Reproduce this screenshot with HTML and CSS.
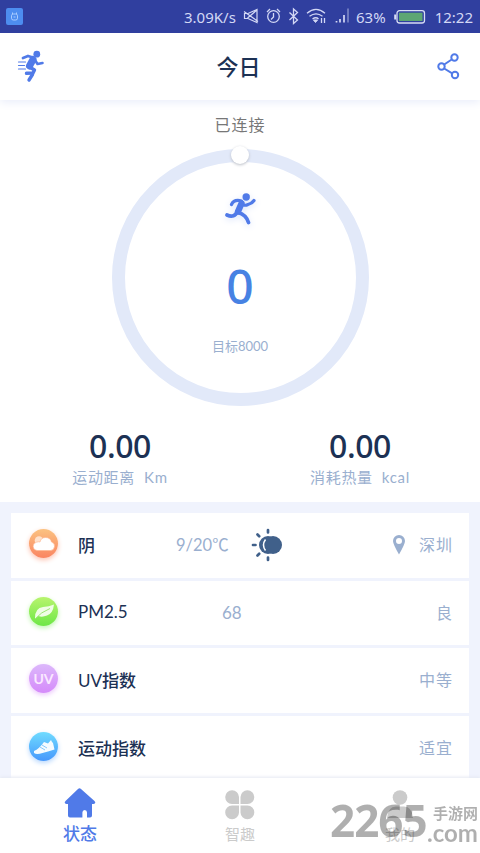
FILE: index.html
```html
<!DOCTYPE html>
<html lang="zh-CN">
<head>
<meta charset="utf-8">
<meta name="viewport" content="width=device-width, initial-scale=1">
<title>今日</title>
<link rel="stylesheet" href="styles.css">
</head>
<body>
<div class="app">
  <div class="status">
    <svg class="usb" width="17" height="17" viewBox="0 0 17 17"><rect width="17" height="17" rx="2" fill="#4d8df0"/><rect x="5.500" y="6" width="6" height="6" rx="1.800" fill="none" stroke="#a9ccff"/><path d="M6.500 6V4.500M10.500 6V4.500M7.500 9h2" fill="none" stroke="#a9ccff"/></svg>
    <span class="speed">3.09K/s</span>
    <svg class="sys" width="108" height="20" viewBox="0 0 108 20" fill="none" stroke="#d3d8f5" stroke-width="1.300">
      <path d="M1.500 6.500H5L14 2.500V15.500L5 11.500H1.500ZM1 4.500L15 14.500M4.500 11L14 3" stroke-width="1.200"/>
      <circle cx="30.500" cy="9.500" r="5.800"/><path d="M30.500 6v4l-2.500 2.500M24 5l3-3M37 5l-3-3"/>
      <path d="M46.500 5.500l8 7.500-4 3.500V2l4 3.500-8 7.500"/>
      <path d="M64 6.200q9-7.500 18 0M66.500 9.300q6.500-5 13 0M69.500 12q3.500-2.500 6 0"/><path d="M70.500 13h4l-2 2.500z" fill="#d3d8f5" stroke-width="1"/><path d="M78.500 16v-5M81.500 11v5"/>
      <path d="M93.500 14v1.500M97 12v3.500M101 8v7.500" stroke-width="1.700"/><path d="M105 1.500v14" stroke-width="1.700" opacity=".45"/>
    </svg>
    <span class="percent">63%</span>
    <svg class="battery" width="32" height="14" viewBox="0 0 32 14"><rect x="3" y=".7" width="27.500" height="12.300" rx="2.500" fill="none" stroke="#d8ddf5" stroke-width="1.300"/><rect x="5" y="2.700" width="23.500" height="8.300" fill="#5da673"/><path d="M1.200 4.500v5" stroke="#d8ddf5" stroke-width="2"/></svg>
    <span class="time">12:22</span>
  </div>

  <header class="header">
    <svg width="30" height="34" viewBox="0 0 30 34" fill="none" stroke="#507ae8" stroke-linecap="round" stroke-linejoin="round">
      <circle cx="21.800" cy="4.200" r="3.400" fill="#507ae8" stroke="none"/>
      <path d="M8 8l5-2 5 1.500" stroke-width="2.800"/><path d="M19 8.500l3.500 5.500 5-1" stroke-width="2.600"/><path d="M18 9.500L14.500 16" stroke-width="7"/><path d="M14.500 17l5 3-1.500 3-6.500.3" stroke-width="3.400"/><path d="M17.500 24.500l-3.500 5.500" stroke-width="3.400"/>
      <path d="M3.500 12h7M3.500 15.500h6M3.500 19h7" stroke-width="1.200"/>
    </svg>
    <h1 class="title">今日</h1>
    <svg width="24" height="28" viewBox="0 0 24 28" fill="none" stroke="#507ae8" stroke-width="2"><circle cx="4.500" cy="13.500" r="3.200"/><circle cx="17.500" cy="4.500" r="3.200"/><circle cx="18" cy="22" r="3.200"/><path d="M7.200 11.500l7.500-5M7.200 15.500l8 4.800"/></svg>
  </header>

  <main class="main">
    <section class="summary">
      <p class="connected">已连接</p>
      <div class="ring">
        <span class="knob"></span>
        <svg class="runner" width="34" height="38" viewBox="0 0 34 38" fill="none" stroke="#507ae8" stroke-linecap="round" stroke-linejoin="round"><circle cx="23.200" cy="6" r="3.700" fill="#507ae8" stroke="none"/><path d="M8.500 13.500q2.500-5.500 10-3.500 1 6 6.500 3.500 4-1 6-4" stroke-width="3.200"/><path d="M18.500 12.500l-3.500 8" stroke-width="6.300"/><path d="M14.500 20q-3 7.500-10.500 4M15 21.500q8 2 10.500 10" stroke-width="3.700"/></svg>
        <strong class="steps">0</strong>
        <span class="goal">目标8000</span>
      </div>
      <div class="stats">
        <div class="stat"><strong class="value">0.00</strong><span class="label">运动距离&nbsp; Km</span></div>
        <div class="stat"><strong class="value">0.00</strong><span class="label">消耗热量&nbsp; kcal</span></div>
      </div>
    </section>

    <section class="list">
      <div class="card">
        <span class="badge weather"><svg width="30" height="30" viewBox="0 0 30 30"><circle cx="10" cy="11.500" r="4.300" fill="#ffe1cb"/><path d="M8 21.500a4.200 4.200 0 0 1-.5-8.300Q10 12.500 11 13q1-4.500 5.500-4.500 5 0 6 4.500 3.500 1 3 4.500-.5 4-4 4Z" fill="#fff" stroke="#ffb18a" stroke-width=".6"/></svg></span>
        <span class="name">阴</span><span class="reading temp">9/20℃</span>
        <svg class="sun" width="32" height="34" viewBox="0 0 32 34"><circle cx="17" cy="17" r="9" fill="#40608a"/><circle cx="22" cy="17" r="9" fill="#40608a"/><path d="M14.500 11.500q-4 5.500 0 11" fill="none" stroke="#fff" stroke-width="1.500"/><path d="M17 2v2.500M17 29.500V32M2 17h2.500M6.500 6.500l1.700 1.700M6.500 27.500l1.700-1.700" stroke="#40608a" stroke-width="2.700" stroke-linecap="round"/></svg>
        <svg class="pin" width="12" height="20" viewBox="0 0 12 20"><path fill-rule="evenodd" d="M6 0a6 6 0 0 1 6 6q0 3-6 13.500Q0 9 0 6a6 6 0 0 1 6-6Zm0 3a3 3 0 1 0 0 6 3 3 0 0 0 0-6Z" fill="#9aafcf"/></svg>
        <span class="result">深圳</span>
      </div>
      <div class="card">
        <span class="badge air"><svg width="30" height="30" viewBox="0 0 30 30"><path d="M6 21Q6 11 14 10q6-.5 11-2.500-1 9-7 11-5 2-8.500.5L6 22Z" fill="#effde5"/><path d="M6 22q6-7 15-10.500" fill="none" stroke="#9be872" stroke-width="1"/></svg></span>
        <span class="name"><span class="latin">PM2.5</span></span><span class="reading pm">68</span><span class="result">良</span>
      </div>
      <div class="card">
        <span class="badge uv">UV</span><span class="name"><span class="latin">UV</span>指数</span><span class="result">中等</span>
      </div>
      <div class="card">
        <span class="badge sport"><svg width="30" height="30" viewBox="0 0 30 30"><path d="M5 19q5-2 10-9l4 1.500 3-3.500q1 2.500 2 3l1.500 6.500q-7 2-12 3.500-6 2-8.500 0Z" fill="#f5fbff"/><path d="M11 15l5 3M13 13l5 3" fill="none" stroke="#6dbcf9" stroke-width=".8"/></svg></span>
        <span class="name">运动指数</span><span class="result">适宜</span>
      </div>
    </section>
  </main>

  <nav class="tabs">
    <a class="tab active"><svg width="34" height="32" viewBox="0 0 34 32"><path d="M15 1q1.500-1.500 3 0L31.500 13q2 2.500-1 3H29v11.500q0 2-2 2h-3V24.500q0-2.500-2.300-2.500t-2.300 2.500v5H7q-2 0-2-2V16H3.500q-3-.5-1-3Z" fill="#507ae8"/></svg><span>状态</span></a>
    <a class="tab"><svg width="34" height="32" viewBox="0 0 34 32" fill="#cbcbcb"><path d="M16 16H9A6.900 6.900 0 1 1 16 9ZM17.500 16H24.500A6.900 6.900 0 1 0 17.500 9ZM16 17.500H9A6.900 6.900 0 1 0 16 24.500ZM17.500 17.500H24.500A6.900 6.900 0 1 1 17.500 24.500Z"/></svg><span>智趣</span></a>
    <a class="tab"><svg width="34" height="32" viewBox="0 0 34 32" fill="#cbcbcb"><circle cx="17" cy="9.500" r="7.300"/><path d="M4 30q1-11.500 9-11.500h8q8 0 9 11.500Z"/></svg><span>我的</span></a>
  </nav>
  <div class="watermark"><span class="digits">2265</span><span class="site"><span class="cn">手游网</span><span class="com">.com</span></span></div>
</div>
</body>
</html>
```
FILE: styles.css
```css
* { box-sizing: border-box; }
body {
  margin: 0;
  background: #fff;
  font-family: Lato, "Noto Sans CJK SC", sans-serif;
}
svg { display: block; flex: none; }
.app {
  position: relative;
  display: flex;
  flex-direction: column;
  width: 480px;
  height: 853px;
  overflow: hidden;
}
.status {
  position: relative;
  z-index: 2;
  display: flex;
  align-items: center;
  flex: none;
  height: 33px;
  padding: 0 7px 0 6px;
  background: #303f9f;
  color: #d3d8f5;
  font-family: "Noto Sans", sans-serif;
  font-size: 15px;
  white-space: nowrap;
}
.speed { width: 53px; margin-left: 161px; }
.sys { margin: 1px 0 0 6px; }
.percent { width: 32px; margin-left: 5px; }
.battery { margin-left: 6px; }
.time { margin-left: auto; }
.header {
  position: relative;
  z-index: 1;
  display: flex;
  align-items: center;
  justify-content: space-between;
  flex: none;
  height: 67px;
  padding: 0 19px 0 15px;
  background: #fff;
  box-shadow: 0 2px 9px #e8ecfa;
}
.title {
  margin: -4px 0 0 -5px;
  color: #1c3154;
  font-size: 22px;
  font-weight: 500;
}
.main {
  flex: 1;
  min-height: 0;
  overflow: hidden;
  background: #f0f3fd;
}
.summary {
  display: flex;
  flex-direction: column;
  align-items: center;
  height: 402px;
  padding-top: 14px;
  background: #fff;
}
.connected {
  margin: 0;
  color: #777;
  font-size: 16px;
  line-height: 22px;
  letter-spacing: 1px;
}
.ring {
  position: relative;
  display: flex;
  flex-direction: column;
  align-items: center;
  flex: none;
  width: 257px;
  height: 257px;
  margin-top: 13px;
  padding-top: 29px;
  border: 13px solid #e2e9f9;
  border-radius: 50%;
}
.knob {
  position: absolute;
  top: -16px;
  left: 106px;
  width: 18px;
  height: 18px;
  border-radius: 50%;
  background: #fff;
  box-shadow: 0 1px 3px #b9bdc6;
}
.runner { margin-left: -1px; filter: drop-shadow(0 2px 3px #dbe4fb); }
.steps {
  margin-top: 29px;
  color: #4782e3;
  font-family: "Noto Sans", sans-serif;
  font-size: 48px;
  font-weight: 500;
  line-height: 56px;
}
.goal {
  margin-top: 22px;
  color: #9aafcf;
  font-size: 13px;
  line-height: 20px;
}
.stats { display: flex; width: 480px; margin-top: 22px; }
.stat { display: flex; flex: 1; flex-direction: column; align-items: center; }
.value {
  color: #1c3154;
  font-family: "Noto Sans", sans-serif;
  font-size: 32px;
  font-weight: 500;
  line-height: 36px;
  letter-spacing: -.4px;
}
.label {
  margin-top: 2px;
  color: #9aafcf;
  font-size: 15px;
  line-height: 22px;
  letter-spacing: .7px;
}
.list { display: grid; gap: 3px; padding: 11px 11px 0; }
.card {
  display: flex;
  align-items: center;
  height: 64.600px;
  padding: 0 16px 0 18px;
  background: #fff;
  color: #9aafcf;
  font-size: 17px;
}
.badge {
  display: grid;
  place-items: center;
  flex: none;
  width: 29px;
  height: 29px;
  margin-top: -3px;
  border-radius: 50%;
}
.weather { background: linear-gradient(#fbc281, #fa8561); box-shadow: 0 2px 5px #fdc3b1; }
.air { background: linear-gradient(#b8f46e, #6de746); box-shadow: 0 2px 5px #c1f6b2; }
.uv {
  background: linear-gradient(#dcb8fb, #d58afa);
  box-shadow: 0 2px 5px #ecc9fc;
  color: #fae9ff;
  font-size: 14px;
  font-weight: 700;
}
.sport { background: linear-gradient(#6fdbff, #4698fc); box-shadow: 0 2px 5px #b9d8fd; }
.name {
  width: 98px;
  margin: -2px 0 0 20px;
  color: #1c3154;
  font-size: 17px;
  font-weight: 500;
}
.latin { font-weight: 400; }
.temp { width: 52px; margin-top: -2px; font-size: 16.500px; white-space: nowrap; }
.pm { margin-left: 46px; }
.sun { margin-left: 23px; }
.pin { margin-left: auto; }
.result { margin: -2px 0 0 auto; font-size: 16px; letter-spacing: 1px; }
.pin + .result { margin-left: 14px; }
.tabs {
  position: relative;
  display: flex;
  flex: none;
  height: 75px;
  background: #fff;
  box-shadow: 0 -1px 3px #e5e8f2;
}
.tab {
  display: flex;
  flex: 1;
  flex-direction: column;
  align-items: center;
  padding-top: 10px;
  color: #cbcbcb;
  font-size: 15px;
  line-height: 28px;
}
.active { color: #507ae8; font-size: 17px; font-weight: 500; }
.watermark {
  position: absolute;
  top: 798px;
  left: 330px;
  display: flex;
  color: #000;
  opacity: .31;
}
.digits {
  width: 97px;
  font-family: "Open Sans", sans-serif;
  font-size: 44px;
  font-weight: 700;
  line-height: 45px;
  letter-spacing: -1px;
}
.site { display: flex; flex-direction: column; font-weight: 700; }
.cn { padding: 7px 0 0 6px; font-size: 15px; line-height: 16px; }
.com { padding-top: 2px; font-size: 24px; line-height: 20px; letter-spacing: 0; }
```
